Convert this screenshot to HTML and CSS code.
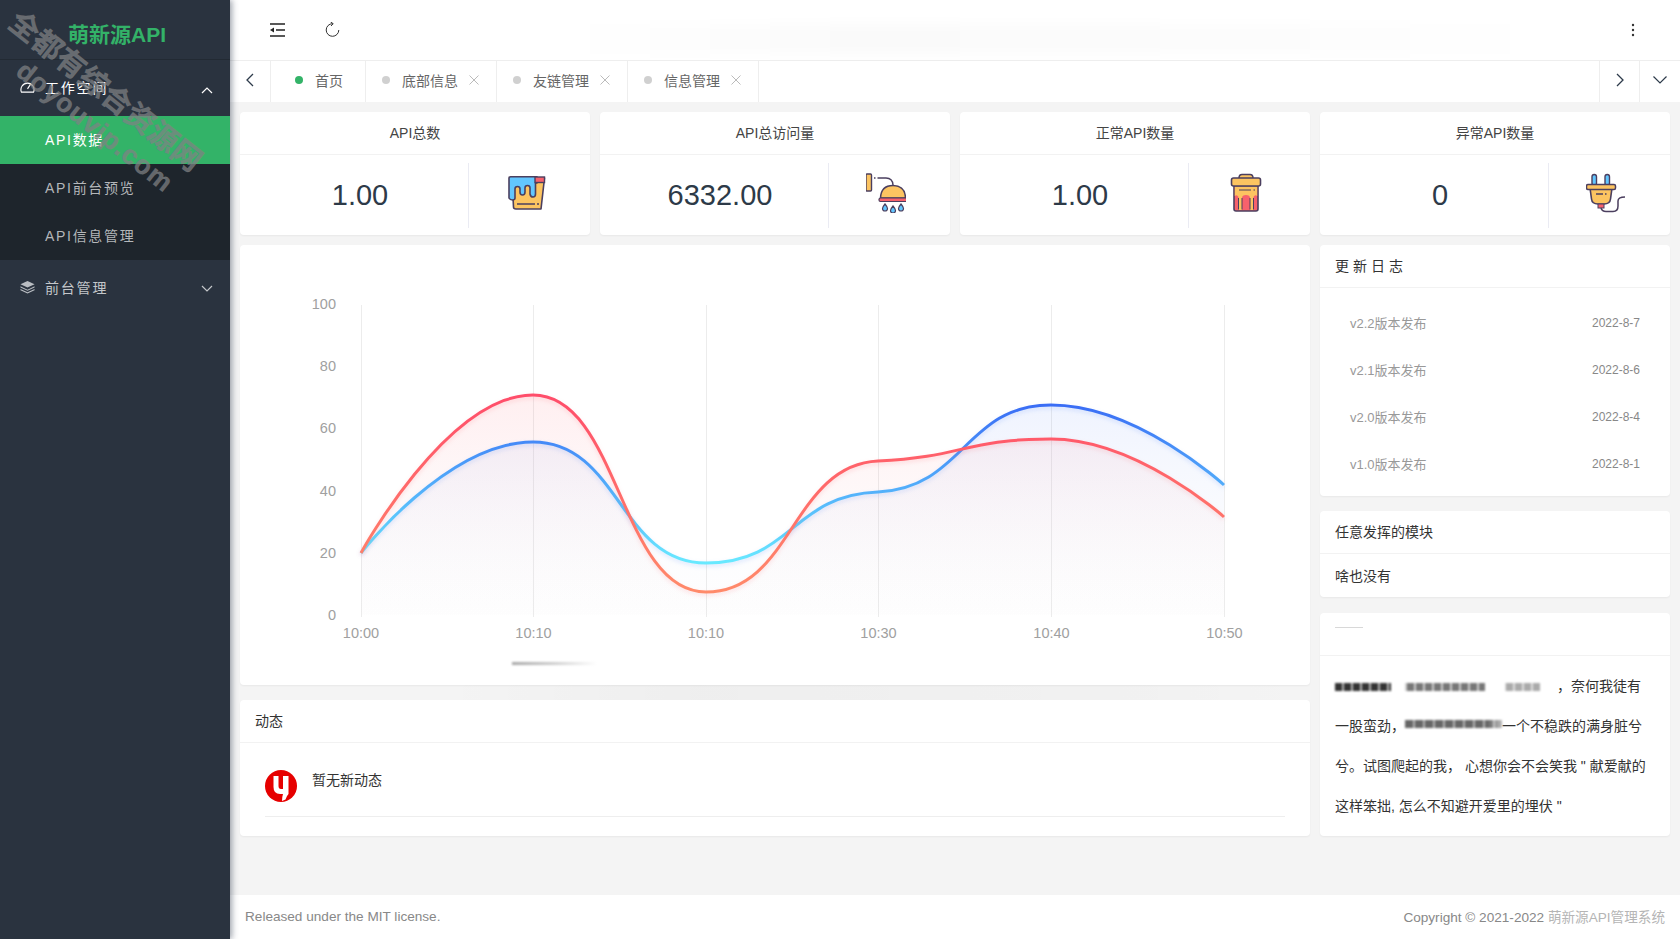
FILE: index.html
```html
<!DOCTYPE html>
<html lang="zh-CN">
<head>
<meta charset="utf-8">
<title>萌新源API</title>
<link rel="stylesheet" href="styles.css">
</head>
<body>
<div class="app">
  <aside class="sidebar">
    <div class="logo">萌新源API</div>
    <div class="menu-title open">
      <svg class="menu-icon" viewBox="0 0 16 14"><path d="M1.5 12.5 A7 7 0 1 1 14.5 12.5 Z" fill="none" stroke="#fff" stroke-width="1.2"/><path d="M8 9 L11 4.5" stroke="#fff" stroke-width="1.2"/></svg>
      <span class="menu-text">工作空间</span>
      <svg class="chev" viewBox="0 0 12 7"><path d="M1 6 L6 1 L11 6" fill="none" stroke="#fff" stroke-width="1.2"/></svg>
    </div>
    <div class="submenu">
      <div class="sub-item active">API数据</div>
      <div class="sub-item">API前台预览</div>
      <div class="sub-item">API信息管理</div>
    </div>
    <div class="menu-title">
      <svg class="menu-icon" viewBox="0 0 16 14"><path d="M8 0.5 L15.5 4 L8 7.5 L0.5 4 Z" fill="#b9bdc2"/><path d="M0.5 6.3 L8 9.8 L15.5 6.3 V7.6 L8 11 L0.5 7.6 Z" fill="#b9bdc2"/><path d="M0.5 9.2 L8 12.6 L15.5 9.2 V10.4 L8 13.8 L0.5 10.4 Z" fill="#b9bdc2"/></svg>
      <span class="menu-text dim">前台管理</span>
      <svg class="chev" viewBox="0 0 12 7"><path d="M1 1 L6 6 L11 1" fill="none" stroke="#c4c7ca" stroke-width="1.2"/></svg>
    </div>
    <div class="watermark wm-one">全都有综合资源网</div>
    <div class="watermark wm-two">doyouvip.com</div>
  </aside>

  <div class="main">
    <header class="topbar">
      <div class="top-left">
        <svg class="top-icon" viewBox="0 0 15 14"><path d="M0 1 H15 M6 7 H15 M0 13 H15" stroke="#222" stroke-width="1.5"/><path d="M0 7 L4 4.5 V9.5 Z" fill="#222"/></svg>
        <svg class="top-icon refresh" viewBox="0 0 15 15"><path d="M13.8 8 A6.3 6.3 0 1 1 7.5 1.7" fill="none" stroke="#333" stroke-width="1"/><path d="M5.6 0 L8.2 1.7 L6 4" fill="none" stroke="#333" stroke-width="1"/></svg>
      </div>
      <div class="smudge smudge-top"></div>
      <svg class="dots" viewBox="0 0 4 14"><circle cx="2" cy="2" r="1.2"/><circle cx="2" cy="7" r="1.2"/><circle cx="2" cy="12" r="1.2"/></svg>
    </header>

    <nav class="tabs">
      <div class="tab-btn left-btn"><svg class="tab-arrow" viewBox="0 0 8 14"><path d="M7 1 L1 7 L7 13" fill="none" stroke="#2d3a4a" stroke-width="1.3"/></svg></div>
      <div class="tab home"><i class="dot on"></i><span>首页</span></div>
      <div class="tab"><i class="dot"></i><span>底部信息</span><svg class="close" viewBox="0 0 10 10"><path d="M0.5 0.5 L9.5 9.5 M9.5 0.5 L0.5 9.5" stroke="#bbb" stroke-width="1"/></svg></div>
      <div class="tab"><i class="dot"></i><span>友链管理</span><svg class="close" viewBox="0 0 10 10"><path d="M0.5 0.5 L9.5 9.5 M9.5 0.5 L0.5 9.5" stroke="#bbb" stroke-width="1"/></svg></div>
      <div class="tab"><i class="dot"></i><span>信息管理</span><svg class="close" viewBox="0 0 10 10"><path d="M0.5 0.5 L9.5 9.5 M9.5 0.5 L0.5 9.5" stroke="#bbb" stroke-width="1"/></svg></div>
      <div class="tab-space"></div>
      <div class="tab-btn right-btn"><svg class="tab-arrow" viewBox="0 0 8 14"><path d="M1 1 L7 7 L1 13" fill="none" stroke="#2d3a4a" stroke-width="1.3"/></svg></div>
      <div class="tab-btn right-btn last-btn"><svg class="tab-down" viewBox="0 0 14 8"><path d="M0.5 0.5 L7 7 L13.5 0.5" fill="none" stroke="#2d3a4a" stroke-width="1.2"/></svg></div>
    </nav>

    <main class="content">
      <section class="stats">
        <div class="card">
          <div class="stat-head">API总数</div>
          <div class="stat-body">
            <div class="stat-value">1.00</div>
            <div class="stat-icon">
              <svg class="icon40" viewBox="0 0 40 40">
                <path d="M6 5 H38.5 L35 36 H10 Q7.5 36 7.5 34 Z" fill="#fcc461" stroke="#4b3f5f" stroke-width="1.6" stroke-linejoin="round"/>
                <path d="M3 5 Q3 3.8 4.5 3.8 H31 V10 H29.5 V21 Q29.5 24 27 24 T24 21 V15 Q24 12.5 21.5 12.5 T19 15 V19 Q19 22 16.5 22 T14 19 V16 Q14 13.5 11.5 13.5 T9 16 V25 Q9 27 6.5 27 T3 25 Z" fill="#62c6ff" stroke="#4b3f5f" stroke-width="1.6" stroke-linejoin="round"/>
                <rect x="29" y="4" width="9.5" height="5.5" fill="#f7616c" stroke="#4b3f5f" stroke-width="1.4"/>
                <path d="M11 31 H29 M31 31 H33" stroke="#4b3f5f" stroke-width="1.4"/>
              </svg>
            </div>
          </div>
        </div>
        <div class="card">
          <div class="stat-head">API总访问量</div>
          <div class="stat-body">
            <div class="stat-value">6332.00</div>
            <div class="stat-icon">
              <svg class="icon40" viewBox="0 0 40 40">
                <rect x="0" y="1" width="5.5" height="17" rx="1" fill="#fcc461" stroke="#4b3f5f" stroke-width="1.4"/>
                <path d="M8 5 H9.5 M11.5 5 H20 Q26.5 5 27 12" fill="none" stroke="#4b3f5f" stroke-width="1.4"/>
                <path d="M14.5 25 Q15 12.5 27 12.5 Q39 12.5 39.5 25 Z" fill="#fcc461" stroke="#4b3f5f" stroke-width="1.5"/>
                <rect x="13" y="25" width="28" height="3.5" rx="1.5" fill="#f7616c" stroke="#4b3f5f" stroke-width="1.2"/>
                <path d="M19 31 Q21.5 34 21.5 35.5 A2.5 2.5 0 0 1 16.5 35.5 Q16.5 34 19 31 Z M27 33 Q29.5 36 29.5 37.5 A2.5 2.5 0 0 1 24.5 37.5 Q24.5 36 27 33 Z M35 31 Q37.5 34 37.5 35.5 A2.5 2.5 0 0 1 32.5 35.5 Q32.5 34 35 31 Z" fill="#62c6ff" stroke="#4b3f5f" stroke-width="1.2"/>
              </svg>
            </div>
          </div>
        </div>
        <div class="card">
          <div class="stat-head">正常API数量</div>
          <div class="stat-body">
            <div class="stat-value">1.00</div>
            <div class="stat-icon">
              <svg class="icon40" viewBox="0 0 40 40">
                <path d="M8 13 H32 V36 Q32 38 30 38 H10 Q8 38 8 36 Z" fill="#f7616c" stroke="#4b3f5f" stroke-width="1.6"/>
                <path d="M8.8 13.5 H31.2 V23 Q29 21 27.5 24 V37 H24 V25 Q24 22 20 22 Q16 22 16 25 V37 H12.5 V24 Q11 21 8.8 23 Z" fill="#fcc461"/>
                <path d="M12.5 36.5 V25 M27.5 36.5 V25 M16 36.5 V25 M24 36.5 V25" stroke="#4b3f5f" stroke-width="1"/>
                <path d="M13 5 Q13 1.5 16 1.5 H24 Q27 1.5 27 5" fill="#fcc461" stroke="#4b3f5f" stroke-width="1.5"/>
                <rect x="5.5" y="5" width="29" height="8" rx="2" fill="#fcc461" stroke="#4b3f5f" stroke-width="1.6"/>
                <path d="M13 17 H25 M27.5 17 H29" stroke="#4b3f5f" stroke-width="1.2"/>
              </svg>
            </div>
          </div>
        </div>
        <div class="card">
          <div class="stat-head">异常API数量</div>
          <div class="stat-body">
            <div class="stat-value">0</div>
            <div class="stat-icon">
              <svg class="icon40" viewBox="0 0 40 40">
                <rect x="6" y="1.5" width="4.5" height="11" rx="2.2" fill="#62c6ff" stroke="#4b3f5f" stroke-width="1.4"/>
                <rect x="19" y="1.5" width="4.5" height="11" rx="2.2" fill="#62c6ff" stroke="#4b3f5f" stroke-width="1.4"/>
                <path d="M4 15 H26 L24.5 26 Q24 31 18 31 H12 Q6 31 5.5 26 Z" fill="#fcc461" stroke="#4b3f5f" stroke-width="1.6"/>
                <rect x="0.5" y="11.5" width="29" height="5" rx="1.5" fill="#fcc461" stroke="#4b3f5f" stroke-width="1.5"/>
                <rect x="12" y="31" width="6" height="4" fill="#f7616c" stroke="#4b3f5f" stroke-width="1"/>
                <path d="M10 21 H17 M19 21 H20.5" stroke="#4b3f5f" stroke-width="1.3"/>
                <path d="M15 35 Q16 38.5 20 38.5 H27 Q32 38.5 32 33 V28 Q32 24 39 24" fill="none" stroke="#4b3f5f" stroke-width="1.5"/>
              </svg>
            </div>
          </div>
        </div>
      </section>

      <section class="lower">
        <div class="col-left">
          <div class="card chart-card">
            <svg class="chart" viewBox="240 245 1070 440">
              <defs>
                <linearGradient id="redLine" gradientUnits="userSpaceOnUse" x1="0" y1="395" x2="0" y2="592"><stop offset="0" stop-color="#ff4d6a"/><stop offset="1" stop-color="#ff8a6a"/></linearGradient>
                <linearGradient id="blueLine" gradientUnits="userSpaceOnUse" x1="0" y1="405" x2="0" y2="563"><stop offset="0" stop-color="#3a6df5"/><stop offset="1" stop-color="#68e9ff"/></linearGradient>
                <linearGradient id="redArea" gradientUnits="userSpaceOnUse" x1="0" y1="395" x2="0" y2="615"><stop offset="0" stop-color="#ff5a6a" stop-opacity=".10"/><stop offset="1" stop-color="#e0d8d8" stop-opacity=".02"/></linearGradient>
                <linearGradient id="blueArea" gradientUnits="userSpaceOnUse" x1="0" y1="405" x2="0" y2="615"><stop offset="0" stop-color="#3a6df5" stop-opacity=".08"/><stop offset="1" stop-color="#d8d8e0" stop-opacity=".02"/></linearGradient>
              </defs>
              <g class="grid">
                <path d="M361.5 305 V617 M533.5 305 V617 M706.5 305 V617 M878.5 305 V617 M1051.5 305 V617 M1224.5 305 V617"/>
              </g>
              <path fill="url(#blueArea)" d="M361 553 C361 553 447 442 533 442 C619 442 620 563 706 563 C792 563 792 495 878 492 C964 488 965 405 1051 405 C1137 405 1224 485 1224 485 V615 H361 Z"/>
              <path fill="url(#redArea)" d="M361 553 C361 553 447 395 533 395 C619 395 620 592 706 592 C792 592 792 465 878 461 C964 457 965 439 1051 439 C1137 439 1224 517 1224 517 V615 H361 Z"/>
              <path class="line line-blue" stroke="url(#blueLine)" d="M361 553 C361 553 447 442 533 442 C619 442 620 563 706 563 C792 563 792 495 878 492 C964 488 965 405 1051 405 C1137 405 1224 485 1224 485"/>
              <path class="line line-red" stroke="url(#redLine)" d="M361 553 C361 553 447 395 533 395 C619 395 620 592 706 592 C792 592 792 465 878 461 C964 457 965 439 1051 439 C1137 439 1224 517 1224 517"/>
              <g class="axis y-axis">
                <text x="336" y="309">100</text><text x="336" y="371">80</text><text x="336" y="433">60</text><text x="336" y="496">40</text><text x="336" y="558">20</text><text x="336" y="620">0</text>
              </g>
              <g class="axis x-axis">
                <text x="361" y="637.5">10:00</text><text x="533.5" y="637.5">10:10</text><text x="706" y="637.5">10:10</text><text x="878.5" y="637.5">10:30</text><text x="1051.5" y="637.5">10:40</text><text x="1224.5" y="637.5">10:50</text>
              </g>
            </svg>
            <div class="smudge smudge-chart"></div>
          </div>
          <div class="card feed-card">
            <div class="smudge smudge-band"></div>
            <div class="card-head">动态</div>
            <div class="feed-body">
              <div class="feed-row">
                <svg class="avatar" viewBox="0 0 32 32"><circle cx="16" cy="16" r="16" fill="#e60000"/><path d="M8.5 6 H13.5 V16 Q13.5 19 16 19 H18 V6 H23.5 V24 Q21.5 26 20.5 29.5 L17 31 Q17 27 18 24 H15 Q8.5 24 8.5 17 Z" fill="#fff"/></svg>
                <span class="feed-text">暂无新动态</span>
              </div>
            </div>
          </div>
        </div>

        <div class="col-right">
          <div class="card log-card">
            <div class="card-head spaced">更新日志</div>
            <ul class="log-list">
              <li class="log-item"><span>v2.2版本发布</span><span class="log-date">2022-8-7</span></li>
              <li class="log-item"><span>v2.1版本发布</span><span class="log-date">2022-8-6</span></li>
              <li class="log-item"><span>v2.0版本发布</span><span class="log-date">2022-8-4</span></li>
              <li class="log-item"><span>v1.0版本发布</span><span class="log-date">2022-8-1</span></li>
            </ul>
          </div>
          <div class="card free-card">
            <div class="card-head">任意发挥的模块</div>
            <div class="free-body">啥也没有</div>
          </div>
          <div class="card poem-card">
            <div class="card-head"><span class="smear-title"></span></div>
            <div class="poem">
              <div class="poem-line"><span class="smear smear-a"></span>，奈何我徒有</div>
              <div class="poem-line">一股蛮劲，<span class="smear smear-b"></span>一个不稳跌的满身脏兮</div>
              <div class="poem-line">兮。试图爬起的我， 心想你会不会笑我 " 献爱献的</div>
              <div class="poem-line">这样笨拙, 怎么不知避开爱里的埋伏 "</div>
            </div>
          </div>
        </div>
      </section>
    </main>

    <footer class="footer">
      <span>Released under the MIT license.</span>
      <span>Copyright © 2021-2022 <span class="brand">萌新源API管理系统</span></span>
    </footer>
  </div>
</div>
</body>
</html>
```

FILE: styles.css
```css
* { box-sizing: border-box; }
html, body { margin: 0; padding: 0; height: 100%; }
body {
  font-family: "Liberation Sans", "Noto Sans CJK SC", sans-serif;
  font-size: 14px;
  color: #333;
  background: #f4f4f4;
  overflow: hidden;
}
.app { display: flex; height: 939px; }

/* Sidebar */
.sidebar {
  position: relative;
  flex: 0 0 230px;
  background: #2a333f;
  box-shadow: 2px 0 6px rgba(40, 50, 70, .45);
  overflow: hidden;
  z-index: 2;
}
.logo {
  height: 60px;
  display: flex;
  align-items: center;
  justify-content: center;
  padding-left: 4px;
  padding-top: 6px;
  font-size: 21px;
  font-weight: 700;
  color: #33b268;
  border-bottom: 1px solid #222a33;
}
.menu-title {
  height: 56px;
  display: flex;
  align-items: center;
  padding: 0 17px 2px 20px;
  color: #fff;
}
.menu-icon { width: 15px; height: 14px; flex: none; }
.menu-text { flex: 1; margin-left: 10px; letter-spacing: 1.8px; font-size: 14px; }
.menu-text.dim { color: #c4c7ca; }
.chev { width: 12px; height: 7px; flex: none; margin-top: 2px; }
.open .chev { margin-top: 6px; }
.submenu { background: #1e252c; }
.sub-item {
  height: 48px;
  line-height: 48px;
  padding-left: 45px;
  color: #b4b7ba;
  letter-spacing: 1.7px;
}
.sub-item.active { background: #33b368; color: #fff; }
.watermark {
  position: absolute;
  left: 0;
  top: 0;
  white-space: nowrap;
  font-weight: 700;
  color: rgba(128, 130, 132, .72);
  -webkit-text-stroke: .6px rgba(128, 130, 132, .5);
  transform-origin: 0 50%;
  pointer-events: none;
}
.wm-one { font-size: 29.5px; line-height: 30px; transform: translate(13px, 3px) rotate(38.5deg); }
.wm-two { font-size: 26.5px; line-height: 28px; letter-spacing: 1px; transform: translate(20px, 53px) rotate(38.5deg); }

/* Main column */
.main { flex: 1; min-width: 0; display: flex; flex-direction: column; }
.topbar {
  position: relative;
  height: 61px;
  flex: none;
  background: #fff;
  border-bottom: 1px solid #eee;
  display: flex;
  align-items: center;
  justify-content: space-between;
  padding: 0 45px 1px 40px;
}
.top-left { display: flex; align-items: center; gap: 40px; }
.top-icon { width: 15px; height: 14px; }
.top-icon.refresh { width: 15px; height: 15px; }
.dots { width: 4px; height: 14px; fill: #333; }
.smudge-top {
  left: 330px;
  top: 24px;
  width: 1000px;
  height: 30px;
  background: linear-gradient(90deg, rgba(0, 0, 0, 0), rgba(0, 0, 0, .018) 30%, rgba(0, 0, 0, .012) 70%, rgba(0, 0, 0, 0));
  filter: blur(6px);
}

.tabs {
  height: 41px;
  flex: none;
  background: #fff;
  display: flex;
  align-items: stretch;
}
.tab-btn {
  display: flex;
  align-items: center;
  justify-content: center;
  width: 41px;
  padding-bottom: 3px;
}
.left-btn { border-right: 1px solid #eee; }
.right-btn { border-left: 1px solid #eee; width: 40px; }
.last-btn { width: 41px; }
.tab-arrow { width: 8px; height: 14px; }
.tab-down { width: 14px; height: 8px; }
.tab {
  width: 131px;
  display: flex;
  align-items: center;
  padding: 0 0 3px 16px;
  border-right: 1px solid #eee;
  color: #666;
  font-size: 14px;
}
.tab.home { width: 95px; padding-left: 24px; }
.tab-space { flex: 1; }
.dot { width: 8px; height: 8px; border-radius: 50%; background: #d0d0d0; margin-right: 12px; flex: none; }
.dot.on { background: #33b368; }
.close { width: 10px; height: 10px; margin-left: 11px; }

.content { flex: 1; min-height: 0; padding: 10px; display: flex; flex-direction: column; gap: 10px; }
.card { position: relative; background: #fff; border-radius: 4px; box-shadow: 0 1px 2px rgba(0, 0, 0, .05); }
.stats { display: grid; grid-template-columns: repeat(4, 350px); gap: 10px; }
.stat-head {
  height: 43px;
  display: flex;
  align-items: center;
  justify-content: center;
  padding-bottom: 2px;
  border-bottom: 1px solid #f2f2f2;
  color: #444;
}
.stat-body { height: 80px; display: flex; align-items: center; }
.stat-value {
  flex: 0 0 228px;
  padding-left: 12px;
  text-align: center;
  font-size: 29px;
  color: #2d3a48;
}
.stat-icon {
  flex: 1;
  height: 65px;
  border-left: 1px solid #eaebf3;
  display: flex;
  align-items: center;
  justify-content: center;
  padding: 0 8px 5px 0;
}
.icon40 { width: 40px; height: 40px; }

.lower { display: grid; grid-template-columns: 1070px 350px; gap: 10px; }
.col-left, .col-right { display: flex; flex-direction: column; gap: 15px; }
.chart-card { height: 440px; overflow: hidden; }
.chart { display: block; width: 1070px; height: 440px; }
.grid path { stroke: #ececec; stroke-width: 1; fill: none; }
.line { fill: none; stroke-width: 3; }
.line-red { filter: drop-shadow(0 2px 2px rgba(255, 90, 100, .18)); }
.line-blue { filter: drop-shadow(0 2px 2px rgba(60, 120, 250, .18)); }
.axis text { font-size: 14.5px; fill: #a0a0a0; font-family: "Liberation Sans", sans-serif; }
.y-axis text { text-anchor: end; }
.x-axis text { text-anchor: middle; }
.smudge { position: absolute; pointer-events: none; }
.smudge-chart {
  left: 272px;
  top: 417px;
  width: 85px;
  height: 3px;
  background: linear-gradient(90deg, #a8a8a8, #cfcfcf 50%, rgba(255, 255, 255, 0));
  filter: blur(1px);
}
.smudge-band {
  left: 200px;
  right: 0;
  top: -15px;
  height: 15px;
  background: linear-gradient(90deg, rgba(0, 0, 0, 0), rgba(0, 0, 0, .025) 30%, rgba(0, 0, 0, .012) 80%, rgba(0, 0, 0, 0));
}

.card-head {
  height: 43px;
  display: flex;
  align-items: center;
  padding: 0 0 2px 15px;
  border-bottom: 1px solid #f2f2f2;
  color: #333;
  font-size: 14px;
}
.card-head.spaced { letter-spacing: 4px; }

.feed-card { height: 136px; }
.feed-body { padding: 27px 25px 0; }
.feed-row { display: flex; align-items: flex-start; padding-bottom: 14px; border-bottom: 1px solid #eee; }
.avatar { width: 32px; height: 32px; flex: none; }
.feed-text { margin-left: 15px; font-size: 14px; line-height: 20px; color: #333; }

.log-card { height: 251px; }
.log-list { list-style: none; margin: 0; padding: 12px 30px 0; }
.log-item {
  height: 47px;
  display: flex;
  align-items: center;
  justify-content: space-between;
  padding-bottom: 2px;
  color: #999;
  font-size: 13px;
}
.log-date { font-size: 12px; color: #888; }

.free-card { height: 86px; }
.free-body { height: 43px; padding: 0 15px 2px; display: flex; align-items: center; color: #333; }

.poem-card { height: 223px; margin-top: 1px; }
.poem { padding: 10px 15px 0; }
.poem-line { height: 40px; line-height: 40px; white-space: nowrap; color: #333; font-size: 14px; }
.smear { display: inline-block; vertical-align: middle; filter: blur(1px); }
.smear-a {
  width: 222px;
  height: 8px;
  background:
    repeating-linear-gradient(90deg, rgba(255, 255, 255, 0) 0 7px, rgba(255, 255, 255, .65) 7px 9px),
    linear-gradient(90deg, #333 0 56px, #fff 56px 70px, #777 70px 150px, #fff 150px 170px, #aaa 170px 205px, #fff 205px 222px);
}
.smear-b {
  width: 97px;
  height: 8px;
  margin-top: -6px;
  background:
    repeating-linear-gradient(90deg, rgba(255, 255, 255, 0) 0 8px, rgba(255, 255, 255, .5) 8px 10px),
    linear-gradient(90deg, #666 0 85%, #bbb 100%);
}
.smear-title { width: 28px; height: 1px; background: #d8d8d8; margin-top: -12px; }

.footer {
  height: 44px;
  flex: none;
  background: #fff;
  display: flex;
  align-items: center;
  justify-content: space-between;
  padding: 0 15px 2px;
  color: #888;
  font-size: 13.6px;
}
.brand { color: #b5b5b5; }
```
